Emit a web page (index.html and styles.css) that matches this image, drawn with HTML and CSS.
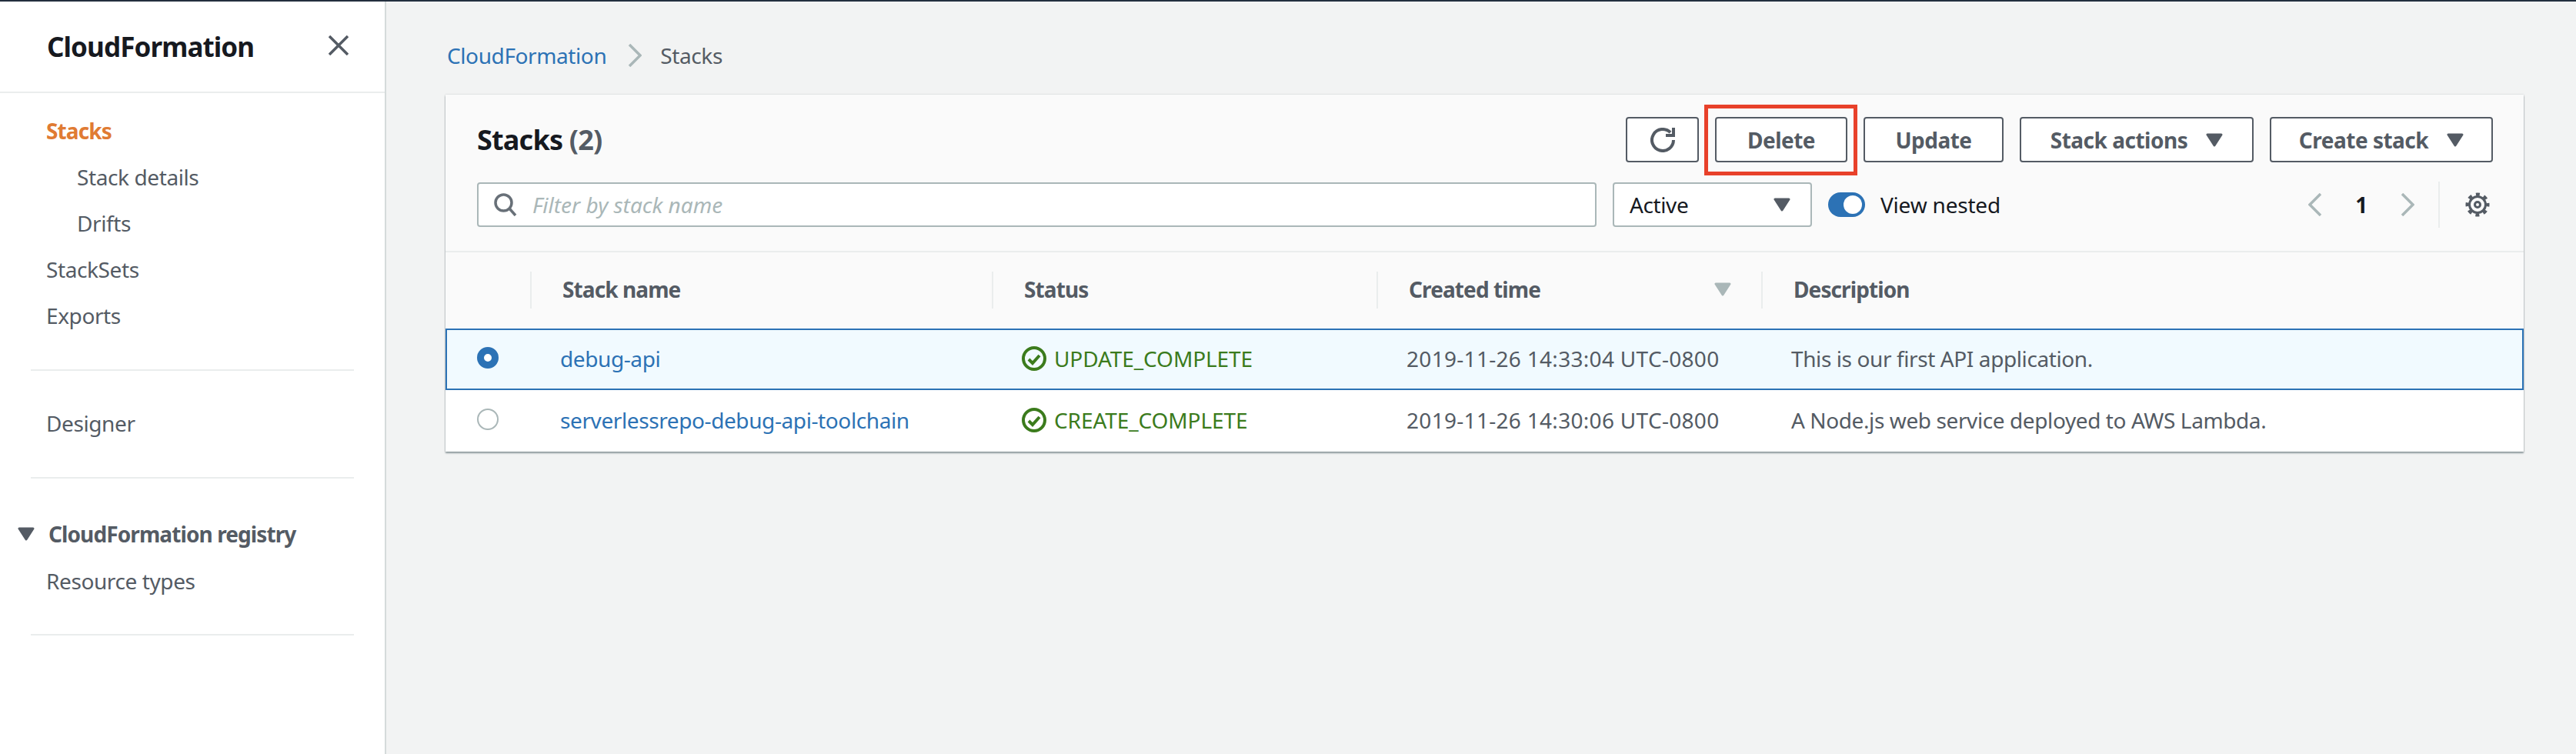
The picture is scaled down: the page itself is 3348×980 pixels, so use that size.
FILE: index.html
```html
<!DOCTYPE html>
<html lang="en">
<head>
    <meta charset="UTF-8">
    <title>CloudFormation - Stacks</title>
    <link rel="stylesheet" href="styles.css">
</head>
<body>
    <div class="page">
        <aside class="sidebar">
            <div class="sidebar-head">
                <span class="sidebar-title">CloudFormation</span>
                <svg class="close-icon" viewBox="0 0 26 26"><path d="M1 1l24 24M25 1L1 25"/></svg>
            </div>
            <nav class="nav">
                <a class="nav-item active">Stacks</a>
                <a class="nav-item sub">Stack details</a>
                <a class="nav-item sub">Drifts</a>
                <a class="nav-item">StackSets</a>
                <a class="nav-item">Exports</a>
                <div class="nav-divider first"></div>
                <a class="nav-item">Designer</a>
                <div class="nav-divider"></div>
                <div class="nav-section">
                    <svg class="caret nav-caret" viewBox="0 0 22 18"><path d="M2 2h18l-9 14z"/></svg>
                    CloudFormation registry
                </div>
                <a class="nav-item compact">Resource types</a>
                <div class="nav-divider last"></div>
            </nav>
        </aside>

        <main class="main">
            <div class="breadcrumb">
                <a class="link">CloudFormation</a>
                <svg class="crumb-sep" viewBox="0 0 18 30"><path d="M2 1l14 14L2 29"/></svg>
                <span>Stacks</span>
            </div>

            <section class="card">
                <header class="card-head">
                    <div class="head-row">
                        <h1 class="card-title">Stacks <span class="count">(2)</span></h1>
                        <div class="actions">
                            <button class="btn btn-icon">
                                <svg class="refresh-icon" viewBox="0 0 16 16"><path d="M10 5h5V0"/><path d="M15 8a7 7 0 1 1-2-4.9"/></svg>
                            </button>
                            <button class="btn btn-delete">Delete<span class="callout"></span></button>
                            <button class="btn btn-update">Update</button>
                            <button class="btn btn-stack">Stack actions<svg class="caret" viewBox="0 0 22 18"><path d="M2 2h18l-9 14z"/></svg></button>
                            <button class="btn btn-create">Create stack<svg class="caret" viewBox="0 0 22 18"><path d="M2 2h18l-9 14z"/></svg></button>
                        </div>
                    </div>
                    <div class="filter-row">
                        <div class="search">
                            <svg class="search-icon" viewBox="0 0 30 30"><circle cx="12.5" cy="12.5" r="10.5"/><path d="M20 20l8 9"/></svg>
                            <span class="placeholder">Filter by stack name</span>
                        </div>
                        <div class="select">Active<svg class="caret" viewBox="0 0 22 18"><path d="M2 2h18l-9 14z"/></svg></div>
                        <span class="toggle"><span class="toggle-knob"></span></span>
                        <span class="toggle-label">View nested</span>
                        <div class="pager">
                            <svg class="pager-arrow" viewBox="0 0 18 30"><path d="M16 1L2 15l14 14"/></svg>
                            <span class="page-num">1</span>
                            <svg class="pager-arrow" viewBox="0 0 18 30"><path d="M2 1l14 14L2 29"/></svg>
                        </div>
                        <div class="settings">
                            <svg class="gear-icon" viewBox="0 0 32 32">
                                <circle class="gear-teeth" cx="16" cy="16" r="13.5"/>
                                <circle cx="16" cy="16" r="10.5"/>
                                <circle cx="16" cy="16" r="3.5"/>
                            </svg>
                        </div>
                    </div>
                </header>

                <div class="table-head cols">
                    <div></div>
                    <div class="th"><span class="th-inner">Stack name</span></div>
                    <div class="th"><span class="th-inner">Status</span></div>
                    <div class="th"><span class="th-inner">Created time<svg class="caret sort-caret" viewBox="0 0 22 18"><path d="M2 2h18l-9 14z"/></svg></span></div>
                    <div class="th"><span class="th-inner">Description</span></div>
                </div>

                <div class="row cols selected">
                    <div class="radio-cell"><span class="radio on"></span></div>
                    <div class="td"><a class="link">debug-api</a></div>
                    <div class="td status">
                        <svg class="ok-icon" viewBox="0 0 32 32"><circle cx="16" cy="16" r="14"/><path d="M9 17l5 5 9-10"/></svg>
                        UPDATE_COMPLETE
                    </div>
                    <div class="td time">2019-11-26 14:33:04 UTC-0800</div>
                    <div class="td">This is our first API application.</div>
                </div>
                <div class="row cols">
                    <div class="radio-cell"><span class="radio"></span></div>
                    <div class="td"><a class="link">serverlessrepo-debug-api-toolchain</a></div>
                    <div class="td status">
                        <svg class="ok-icon" viewBox="0 0 32 32"><circle cx="16" cy="16" r="14"/><path d="M9 17l5 5 9-10"/></svg>
                        CREATE_COMPLETE
                    </div>
                    <div class="td time">2019-11-26 14:30:06 UTC-0800</div>
                    <div class="td">A Node.js web service deployed to AWS Lambda.</div>
                </div>
            </section>
        </main>
    </div>
</body>
</html>
```

FILE: styles.css
```css
* {
    box-sizing: border-box;
}

body {
    margin: 0;
    background: #f2f3f3;
    color: #545b64;
    font-family: 'Noto Sans', sans-serif;
    font-size: 28px;
    letter-spacing: -0.4px;
    border-top: 2px solid #232f3e;
}

svg {
    display: block;
    fill: none;
    stroke: currentColor;
}

.page {
    display: flex;
    height: 978px;
    overflow: hidden;
}

/* sidebar */
.sidebar {
    flex: none;
    width: 502px;
    height: 100%;
    background: #fff;
    border-right: 2px solid #d5dbdb;
}

.sidebar-head {
    display: flex;
    align-items: center;
    justify-content: space-between;
    height: 119px;
    padding: 0 47px 0 61px;
    border-bottom: 2px solid #eaeded;
}

.sidebar-title {
    font-size: 35px;
    font-weight: 700;
    letter-spacing: -0.9px;
    color: #16191f;
}

.close-icon {
    width: 26px;
    height: 26px;
    stroke: #545b64;
    stroke-width: 3.5;
    margin-bottom: 4px;
}

.nav {
    padding-top: 21px;
}

.nav-item {
    display: block;
    height: 60px;
    line-height: 56px;
    padding-left: 60px;
}

.nav-item.sub {
    padding-left: 100px;
}

.nav-item.active {
    color: #e07b33;
    font-weight: 700;
    letter-spacing: -0.9px;
}

.nav-item.compact {
    margin-top: 3px;
}

.nav-divider {
    height: 2px;
    margin: 38px 40px;
    background: #eaeded;
}

.nav-divider.first {
    margin-bottom: 40px;
}

.nav-divider.last {
    margin-top: 37px;
}

.nav-section {
    display: flex;
    align-items: center;
    height: 60px;
    margin-top: 42px;
    padding-left: 23px;
    font-weight: 700;
    letter-spacing: -0.9px;
}

.caret {
    flex: none;
    width: 22px;
    height: 18px;
    fill: #545b64;
    stroke: #545b64;
    stroke-width: 3;
    stroke-linejoin: round;
}

.nav-caret {
    margin-right: 18px;
}

/* main column */
.main {
    flex: 1;
    min-width: 0;
    padding: 50px 68px 0 77px;
}

.breadcrumb {
    display: flex;
    align-items: center;
    height: 40px;
    margin-bottom: 31px;
    padding-left: 2px;
}

.link {
    color: #2c72b5;
}

.crumb-sep {
    width: 18px;
    height: 30px;
    margin: 0 24px 0 28px;
    stroke: #aab7b8;
    stroke-width: 3.5;
}

.card {
    background: #fff;
    box-shadow: 0 2px 2px rgba(0, 28, 36, 0.4), 0 0 2px rgba(0, 28, 36, 0.2);
}

.card-head {
    padding: 29px 40px 31px 41px;
    background: #fafafa;
    border-bottom: 2px solid #eaeded;
}

.head-row {
    display: flex;
    align-items: center;
    justify-content: space-between;
    margin-bottom: 26px;
}

.card-title {
    margin: 0;
    font-size: 36px;
    font-weight: 700;
    letter-spacing: -0.8px;
    color: #16191f;
}

.count {
    color: #545b64;
}

.actions {
    display: flex;
    gap: 21px;
}

.btn {
    position: relative;
    display: flex;
    align-items: center;
    justify-content: center;
    height: 59px;
    padding: 0;
    background: #fff;
    border: 2px solid #545b64;
    border-radius: 4px;
    color: #545b64;
    font-family: inherit;
    font-size: 28px;
    font-weight: 700;
    letter-spacing: -0.5px;
}

.btn .caret {
    margin-left: 24px;
}

.btn-icon { width: 95px; }
.btn-delete { width: 172px; }
.btn-update { width: 182px; }
.btn-stack { width: 304px; }
.btn-create { width: 290px; }

.refresh-icon {
    width: 32px;
    height: 32px;
    stroke-width: 2;
}

/* red annotation around the delete button */
.callout {
    position: absolute;
    top: -18px;
    right: -15px;
    bottom: -19px;
    left: -16px;
    border: 5px solid #e8412a;
}

.filter-row {
    display: flex;
    align-items: center;
    height: 58px;
}

.search {
    display: flex;
    align-items: center;
    flex: none;
    width: 1455px;
    height: 58px;
    padding-left: 20px;
    background: #fff;
    border: 2px solid #aab7b8;
    border-radius: 4px;
}

.search-icon {
    width: 30px;
    height: 30px;
    margin-right: 20px;
    stroke: #687078;
    stroke-width: 3.5;
}

.placeholder {
    color: #aab7b8;
    font-style: italic;
    letter-spacing: 0;
}

.select {
    display: flex;
    align-items: center;
    justify-content: space-between;
    width: 259px;
    height: 58px;
    margin-left: 21px;
    padding: 0 26px 0 20px;
    background: #fff;
    border: 2px solid #aab7b8;
    border-radius: 4px;
    color: #16191f;
}

.toggle {
    display: block;
    width: 48px;
    height: 32px;
    margin: 0 20px 0 21px;
    padding: 4px 4px 4px 20px;
    background: #2c72b5;
    border-radius: 16px;
}

.toggle-knob {
    display: block;
    width: 24px;
    height: 24px;
    background: #fff;
    border-radius: 50%;
}

.toggle-label {
    color: #16191f;
    letter-spacing: -0.2px;
}

.pager {
    display: flex;
    align-items: center;
    margin-left: auto;
}

.pager-arrow {
    width: 18px;
    height: 30px;
    stroke: #aab7b8;
    stroke-width: 3.5;
}

.page-num {
    width: 102px;
    text-align: center;
    font-weight: 700;
    color: #16191f;
}

.settings {
    display: flex;
    align-items: center;
    height: 60px;
    margin-left: 31px;
    padding: 0 4px 0 33px;
    border-left: 2px solid #eaeded;
}

.gear-icon {
    width: 32px;
    height: 32px;
    stroke-width: 3;
}

.gear-teeth {
    stroke-width: 4;
    stroke-dasharray: 5 5.6;
    stroke-dashoffset: 2.5;
}

/* table */
.cols {
    display: grid;
    grid-template-columns: 108px 600px 500px 500px 1fr;
    border: 2px solid transparent;
}

.table-head {
    height: 99px;
    background: #fafafa;
    border-bottom: 0;
    padding-top: 23px;
}

.th-inner {
    display: flex;
    align-items: center;
    height: 48px;
    padding: 0 39px 2px 40px;
    border-left: 2px solid #eaeded;
    font-weight: 700;
    letter-spacing: -0.9px;
}

.sort-caret {
    margin-left: auto;
    fill: #aab7b8;
    stroke: #aab7b8;
}

.row {
    height: 80px;
    align-items: center;
}

.row.selected {
    background: #f1faff;
    border-color: #2c72b5;
}

.radio-cell {
    padding: 0 0 4px 39px;
}

.radio {
    display: block;
    width: 28px;
    height: 28px;
    border: 2px solid #aab7b8;
    border-radius: 50%;
    background: #fff;
}

.radio.on {
    border: 9px solid #2c72b5;
}

.td {
    display: flex;
    align-items: center;
    padding: 0 0 2px 39px;
}

.time {
    letter-spacing: 0.3px;
}

.status {
    color: #3b7b1c;
    letter-spacing: -0.1px;
}

.ok-icon {
    flex: none;
    width: 32px;
    height: 32px;
    margin-right: 10px;
    stroke-width: 4;
}
```
